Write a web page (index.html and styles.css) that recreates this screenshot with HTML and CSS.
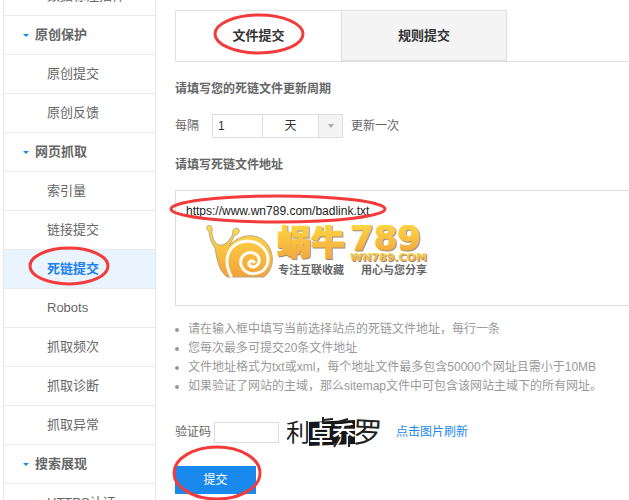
FILE: index.html
```html
<!DOCTYPE html>
<html lang="zh-CN">
<head>
<meta charset="utf-8">
<title>死链提交</title>
<link rel="stylesheet" href="styles.css">
</head>
<body>
<div class="page">
  <nav class="sidebar">
    <a class="item" href="#">数据标注插件</a>
    <a class="item group" href="#">原创保护</a>
    <a class="item" href="#">原创提交</a>
    <a class="item" href="#">原创反馈</a>
    <a class="item group" href="#">网页抓取</a>
    <a class="item" href="#">索引量</a>
    <a class="item" href="#">链接提交</a>
    <a class="item active" href="#">死链提交</a>
    <a class="item" href="#">Robots</a>
    <a class="item" href="#">抓取频次</a>
    <a class="item" href="#">抓取诊断</a>
    <a class="item" href="#">抓取异常</a>
    <a class="item group" href="#">搜索展现</a>
    <a class="item" href="#">HTTPS认证</a>
  </nav>
  <main class="main">
    <div class="tabs">
      <button class="tab selected" type="button">文件提交</button>
      <button class="tab" type="button">规则提交</button>
    </div>
    <form class="form">
      <h2 class="title">请填写您的死链文件更新周期</h2>
      <div class="period">
        <label for="count">每隔</label>
        <div class="combo">
          <input class="count" id="count" type="text" value="1">
          <select class="unit" aria-label="周期单位"><option>天</option></select>
          <span class="arrow"></span>
        </div>
        <span>更新一次</span>
      </div>
      <h2 class="title"><label for="urls">请填写死链文件地址</label></h2>
      <div class="editor">
        <textarea class="urls" id="urls" spellcheck="false">https://www.wn789.com/badlink.txt</textarea>
        <svg class="logo" width="232" height="56" viewBox="0 0 232 56">
          <defs>
            <linearGradient id="gold" x1="0" y1="0" x2="0" y2="1">
              <stop offset="0" stop-color="#ffdf45"/><stop offset="1" stop-color="#f3a13c"/>
            </linearGradient>
          </defs>
          <path d="M1 3C0 0 5-1 6 3C5 12 9 19 13 20C19 21 23 16 27 9C25 4 32 1 33 5C34 8 30 10 28 11C26 16 24 19 23 21C34 8 53 7 62 20C70 33 66 46 58 52H21C12 45 11 33 9 23C5 18 3 10 3 6C2 6 1 4 1 3Z" fill="url(#gold)" stroke="#b9a589" stroke-width="1"/>
          <path d="M25 51C16 34 23 17 41 16C56 16 65 29 61 40C57 51 39 52 35 40C33 30 43 24 51 30C57 37 49 45 44 41C41 38 45 34 48 37" fill="none" stroke="#fffdf8" stroke-width="3" stroke-linecap="round"/>
          <g class="shadow"><text class="brand" x="72" y="31">蜗牛</text><text class="digits" x="145" y="26">789</text><text class="domain" x="145" y="37">WN789.COM</text></g>
          <g fill="url(#gold)" stroke="url(#gold)"><text class="brand" x="71" y="30">蜗牛</text><text class="digits" x="144" y="25">789</text><text class="domain" x="144" y="36">WN789.COM</text></g>
          <text class="slogan" x="72" y="49">专注互联收藏</text>
          <text class="slogan" x="155" y="49">用心与您分享</text>
        </svg>
      </div>
      <ul class="notes">
        <li>请在输入框中填写当前选择站点的死链文件地址，每行一条</li>
        <li>您每次最多可提交20条文件地址</li>
        <li>文件地址格式为txt或xml，每个地址文件最多包含50000个网址且需小于10MB</li>
        <li>如果验证了网站的主域，那么sitemap文件中可包含该网站主域下的所有网址。</li>
      </ul>
      <div class="verify">
        <label for="code">验证码</label>
        <input class="code" id="code" type="text">
        <svg class="captcha" width="96" height="36" viewBox="0 0 96 36">
          <path d="M22 8L68 6V30L22 32Z" fill="#171717"/>
          <text class="glyph" x="-1" y="27">利</text>
          <text class="glyph light" x="22" y="29">卓</text>
          <text class="glyph light" x="45" y="29">乔</text>
          <path d="M36 3V9M36 6L46 5M51 8L61 5M53 23L47 33M62 22V33" fill="none" stroke="#222" stroke-width="2"/>
          <text class="glyph wide" x="66" y="29" transform="rotate(3 80 18)">罗</text>
        </svg>
        <a class="refresh" href="#">点击图片刷新</a>
      </div>
      <button class="submit" type="button">提交</button>
    </form>
  </main>
  <svg class="marks" width="629" height="500" viewBox="0 0 629 500">
    <ellipse cx="259" cy="34" rx="44" ry="19"/>
    <ellipse cx="278" cy="209" rx="107" ry="13"/>
    <ellipse cx="69" cy="266" rx="39" ry="18"/>
    <ellipse cx="217" cy="473" rx="43" ry="26"/>
  </svg>
</div>
</body>
</html>
```
FILE: styles.css
```css
* { box-sizing: border-box; }
body {
  margin: 0;
  background: #fff;
  color: #666;
  font: 12px/20px "Liberation Sans", "Noto Sans CJK SC", sans-serif;
}
a { text-decoration: none; }
input, select, textarea, button { font: inherit; margin: 0; border-radius: 0; }
.page {
  position: relative;
  display: flex;
  align-items: flex-start;
  height: 100vh;
  overflow: hidden;
}
.sidebar {
  flex: none;
  width: 153px;
  margin: -23px 0 0 3px;
  border: 1px solid #e8e8e8;
  border-top: 0;
}
.item {
  display: flex;
  align-items: center;
  height: 39px;
  padding-left: 43px;
  border-bottom: 1px solid #ebebeb;
  color: #666;
  font-size: 13px;
}
.group { padding-left: 19px; font-weight: bold; }
.group::before {
  content: "";
  margin-right: 6px;
  border: 3px solid transparent;
  border-top-color: #1a89ed;
  border-bottom: 0;
}
.active { background: #eaf4fe; color: #1a7ff0; font-weight: bold; }
.main { flex: 1; min-width: 0; padding: 10px 0 0 19px; }
.tabs { display: flex; border-bottom: 1px solid #e0e0e0; }
.tab {
  width: 165px;
  height: 51px;
  padding: 0;
  border: 1px solid #e0e0e0;
  border-left: 0;
  background: #f4f4f4;
  color: #333;
  font-size: 13px;
  font-weight: bold;
}
.tab.selected { width: 167px; border-left: 1px solid #e0e0e0; border-bottom: 0; background: #fff; }
.title { margin: 17px 0 15px; font-size: 12px; line-height: 20px; }
.period { display: flex; align-items: center; height: 24px; }
.combo { display: flex; margin: 0 8px 0 13px; }
.count { width: 51px; height: 24px; padding: 0 5px; border: 1px solid #ddd; color: #333; }
.unit {
  appearance: none;
  width: 55px;
  height: 24px;
  padding: 0;
  border: 1px solid #ddd;
  border-width: 1px 0;
  background: #fff;
  color: #333;
  text-align: center;
  text-align-last: center;
}
.arrow { display: grid; place-items: center; width: 25px; height: 24px; border: 1px solid #ddd; background: #f4f4f4; }
.arrow::before { content: ""; border: 3px solid transparent; border-top: 4px solid #aaa; border-bottom: 0; }
.editor { position: relative; margin-right: -2px; }
.urls {
  display: block;
  width: 100%;
  height: 116px;
  padding: 10px;
  border: 1px solid #ddd;
  color: #222;
  resize: none;
}
.logo { position: absolute; left: 31px; top: 35px; }
.logo text { font-family: "Noto Sans CJK SC", sans-serif; font-weight: 900; }
.logo .brand { font-size: 34px; stroke-width: 1; }
.logo .digits { font-family: "DejaVu Sans", sans-serif; font-size: 34px; stroke-width: 1; stroke-linejoin: round; }
.logo .domain { font-family: "DejaVu Sans", sans-serif; font-size: 11px; stroke-width: 0; }
.logo .slogan { font-size: 11px; font-weight: 700; fill: #666; }
.shadow { fill: #9b8972; stroke: #9b8972; }
.notes { margin: 14px 0 0; padding: 0; list-style: none; color: #999; }
.notes li { display: flex; align-items: center; line-height: 19px; white-space: nowrap; }
.notes li::before { content: ""; width: 4px; height: 4px; margin-right: 9px; border-radius: 50%; background: #999; }
.verify { display: flex; align-items: center; height: 36px; margin-top: 18px; }
.code { width: 65px; height: 21px; margin: 0 8px 0 3px; border: 1px solid #ddd; }
.captcha { margin-right: 13px; }
.glyph { font: 24px "Noto Sans CJK SC", sans-serif; fill: #222; }
.glyph.light { font-weight: 500; fill: #fff; }
.glyph.wide { font-size: 29px; }
.refresh { color: #1a89ed; }
.submit { display: block; width: 81px; height: 28px; margin-top: 16px; padding: 0; border: 0; background: #1a89ed; color: #fff; }
.marks { position: absolute; left: 0; top: 0; pointer-events: none; fill: none; stroke: #f33b3b; stroke-width: 3; }
```
